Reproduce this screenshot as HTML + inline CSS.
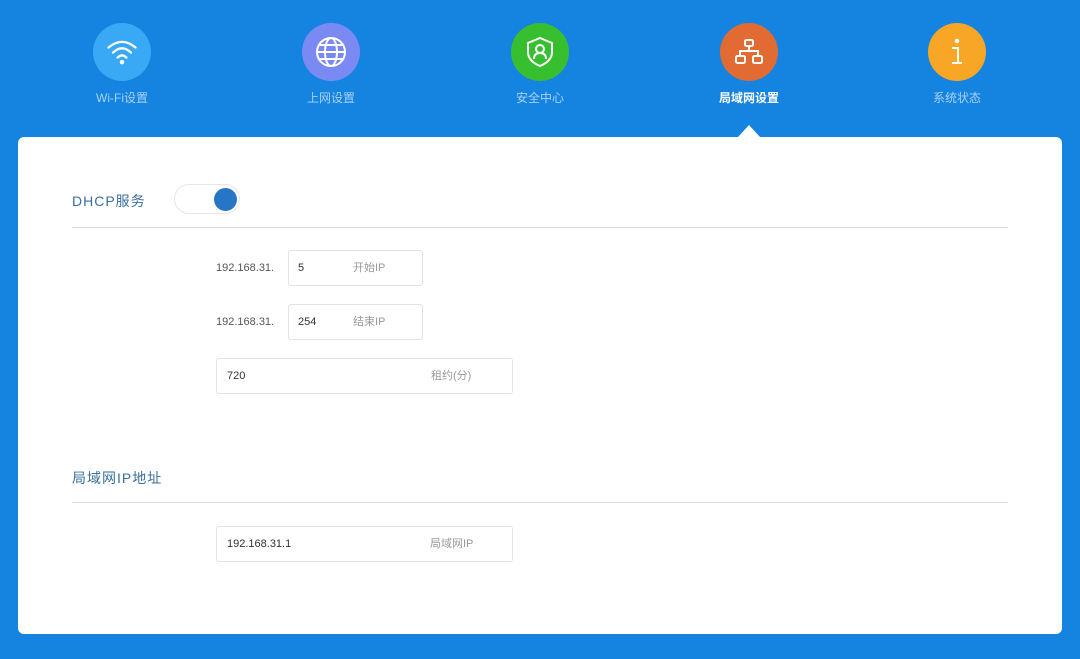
<!DOCTYPE html>
<html><head><meta charset="utf-8"><style>
*{margin:0;padding:0;box-sizing:border-box}
body{width:1080px;height:659px;background:#1584e0;font-family:"Liberation Sans","Noto Sans CJK SC",sans-serif;position:relative;overflow:hidden}
.ic{position:absolute;top:23px;width:58px;height:58px;border-radius:50%;display:flex;align-items:center;justify-content:center}
.lb{position:absolute;top:89px;width:120px;text-align:center;font-size:12px;color:#a9d1f5}
.card{position:absolute;left:18px;top:137px;width:1044px;height:497px;background:#fff;border-radius:6px}
.tri{position:absolute;left:738px;top:125px;width:0;height:0;border-left:11px solid transparent;border-right:11px solid transparent;border-bottom:12px solid #fff}
.t{position:absolute;font-size:14px;color:#3a6f9e;letter-spacing:1px}
.hr{position:absolute;left:72px;width:936px;height:1px;background:#dcdcdc}
.in{position:absolute;height:36px;border:1px solid #e2e2e2;border-radius:3px;font-size:11px;color:#333}
.in span{position:absolute;top:0;line-height:34px}
.in .p{color:#999}
.pre{position:absolute;font-size:11px;color:#555}
</style></head><body>
<div class="ic" style="left:93px;background:#3aa9f5"><svg width="36" height="36" viewBox="0 0 32 32" fill="none" stroke="#fff" stroke-width="2" stroke-linecap="round"><path d="M4 12Q16 2 28 12"/><path d="M8 16.5Q16 9 24 16.5"/><path d="M12 21Q16 17 20 21"/><circle cx="16" cy="25" r="1" fill="#fff"/></svg></div>
<div class="lb" style="left:62px">Wi-Fi设置</div>
<div class="ic" style="left:302px;background:#7b8af2"><svg width="34" height="34" viewBox="0 0 34 34" fill="none" stroke="#fff" stroke-width="2"><circle cx="17" cy="17" r="14"/><ellipse cx="17" cy="17" rx="6" ry="14"/><path d="M3 17H31M5 10H29M5 24H29"/></svg></div>
<div class="lb" style="left:271px">上网设置</div>
<div class="ic" style="left:511px;background:#38bf30"><svg width="32" height="34" viewBox="0 0 32 34" fill="none" stroke="#fff" stroke-width="2"><path d="M16 3L28 8V17Q28 26 16 31Q4 26 4 17V8Z"/><circle cx="16" cy="14" r="4"/><path d="M10 24Q10 18 16 18Q22 18 22 24"/></svg></div>
<div class="lb" style="left:480px">安全中心</div>
<div class="ic" style="left:720px;background:#e26a33"><svg width="32" height="32" viewBox="0 0 32 32" fill="none" stroke="#fff" stroke-width="2"><rect x="12" y="4" width="8" height="6" rx="1.5"/><path d="M16 10V15M7 20V15H25V20"/><rect x="3" y="20" width="9" height="7" rx="1.5"/><rect x="20" y="20" width="9" height="7" rx="1.5"/></svg></div>
<div class="lb" style="left:689px;color:#fff;font-weight:bold">局域网设置</div>
<div class="ic" style="left:928px;background:#f8a625"><svg width="30" height="34" viewBox="0 0 30 34" fill="none" stroke="#fff" stroke-width="2"><circle cx="15" cy="6" r="1.3" fill="#fff"/><path d="M10 13H16V28M10 28H20"/></svg></div>
<div class="lb" style="left:897px">系统状态</div>
<div class="tri"></div>
<div class="card"></div>
<div class="t" style="left:72px;top:191px">DHCP服务</div>
<div style="position:absolute;left:174px;top:184px;width:66px;height:30px;border:1px solid #e6e6e6;border-radius:15px;background:#fff"><div style="position:absolute;left:39px;top:3px;width:23px;height:23px;border-radius:50%;background:#2775c7"></div></div>
<div class="hr" style="top:227px"></div>
<div class="pre" style="left:216px;top:262px">192.168.31.</div>
<div class="in" style="left:288px;top:250px;width:135px"><span style="left:9px">5</span><span class="p" style="left:64px">开始IP</span></div>
<div class="pre" style="left:216px;top:316px">192.168.31.</div>
<div class="in" style="left:288px;top:304px;width:135px"><span style="left:9px">254</span><span class="p" style="left:64px">结束IP</span></div>
<div class="in" style="left:216px;top:358px;width:297px"><span style="left:10px">720</span><span class="p" style="left:214px">租约(分)</span></div>
<div class="t" style="left:72px;top:468px">局域网IP地址</div>
<div class="hr" style="top:502px"></div>
<div class="in" style="left:216px;top:526px;width:297px"><span style="left:10px">192.168.31.1</span><span class="p" style="left:213px">局域网IP</span></div>
</body></html>
